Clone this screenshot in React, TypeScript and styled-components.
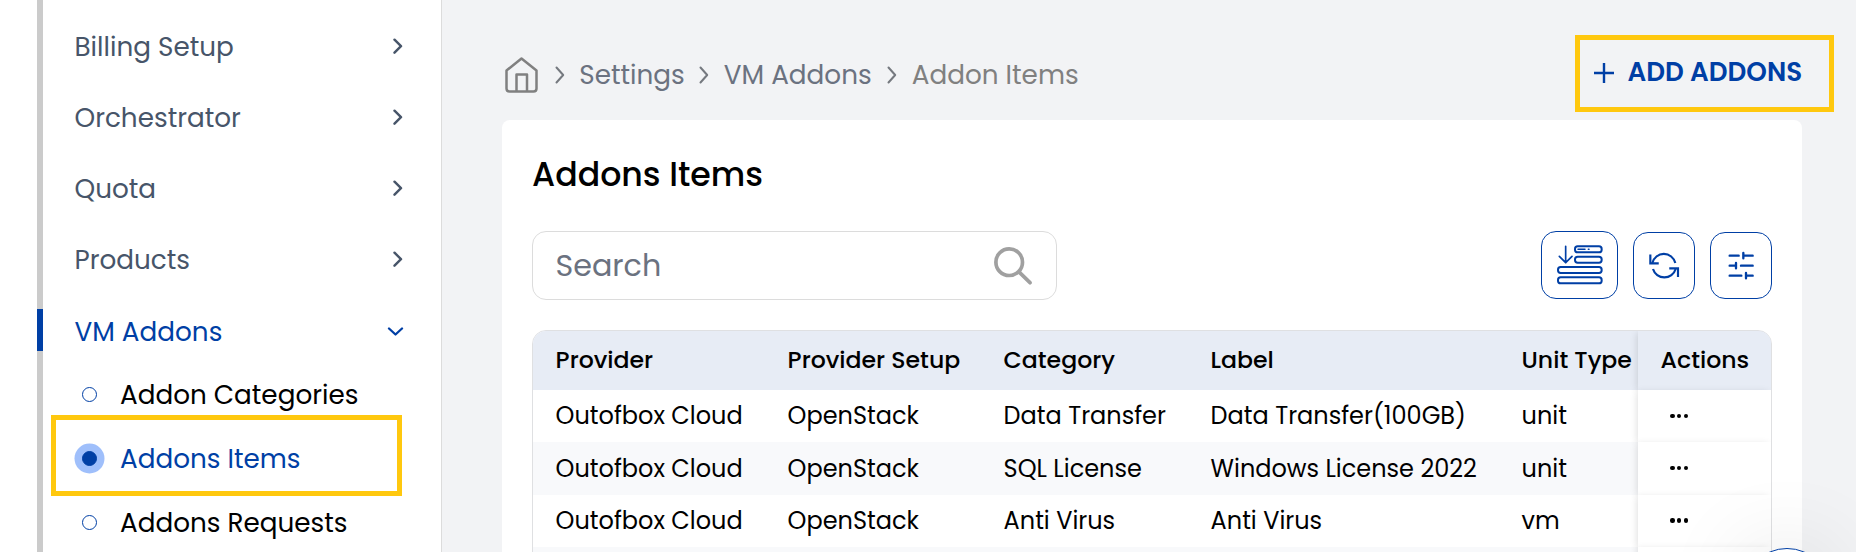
import React from 'react';
import styled, { createGlobalStyle } from 'styled-components';

const BLUE = '#003fa5';

const GlobalStyle = createGlobalStyle`
  * { box-sizing: border-box; }
  body { margin: 0; background: #fff; overflow: hidden; font-family: Poppins, Inter, 'Liberation Sans', sans-serif; }
`;

const Page = styled.div`
  display: flex;
  height: 552px;
  overflow: hidden;
  position: relative;
`;

/* Sidebar */
const Sidebar = styled.nav`
  width: 442px;
  flex: none;
  padding-left: 37px;
  border-right: 1px solid #dcdcdc;
  display: flex;
`;
const Rail = styled.div`
  width: 6px;
  background: #cbcbcb;
`;
const Menu = styled.div`
  flex: 1;
  padding-top: 15px;
  display: flex;
  flex-direction: column;
  gap: 9.33px;
`;
const MenuItem = styled.div<{ $active?: boolean }>`
  position: relative;
  height: 62px;
  flex: none;
  padding: 0 ${p => (p.$active ? 37 : 38.5)}px 0 31.5px;
  display: flex;
  align-items: center;
  justify-content: space-between;
  font-size: 26.25px;
  color: ${p => (p.$active ? BLUE : '#475569')};
`;
const ActiveMark = styled.span`
  position: absolute;
  left: -6px;
  top: 9px;
  width: 6px;
  height: 42px;
  background: ${BLUE};
`;
const Label = styled.span`
  white-space: nowrap;
`;
const MenuLabel = styled(Label)`
  padding-top: 1px;
`;
const SubMenu = styled.div`
  margin-top: -9.33px;
  display: flex;
  flex-direction: column;
`;
const SubItem = styled.div<{ $active?: boolean }>`
  position: relative;
  height: 64px;
  display: flex;
  align-items: center;
  gap: 15px;
  padding-left: 31px;
  font-size: 26.25px;
  color: ${p => (p.$active ? BLUE : '#000')};
`;
const SubLabel = styled(Label)`
  padding-top: 2px;
`;
const BulletSlot = styled.span`
  width: 31px;
  display: flex;
  justify-content: center;
`;
const Bullet = styled.span<{ $active?: boolean }>`
  width: 15.5px;
  height: 15.5px;
  border-radius: 50%;
  border: 1px solid ${BLUE};
  background: ${p => (p.$active ? BLUE : '#fff')};
  box-shadow: ${p => (p.$active ? '0 0 0 7.5px #9fbffb' : 'none')};
`;
const MenuHighlight = styled.span`
  position: absolute;
  left: 8px;
  top: -11.5px;
  width: 351px;
  height: 81px;
  border: 5px solid #ffc80e;
`;

/* Main */
const Main = styled.main`
  flex: 1;
  background: #f2f3f5;
  padding: 35px 22px 0 60px;
`;
const TopBar = styled.header`
  height: 85px;
  display: flex;
  align-items: flex-start;
  justify-content: space-between;
`;
const Breadcrumb = styled.div`
  height: 80px;
  display: flex;
  align-items: center;
  font-size: 26.25px;
  padding-left: 3px;
`;
const Crumb = styled.span<{ $w: number; $last?: boolean }>`
  width: ${p => p.$w}px;
  white-space: nowrap;
  color: ${p => (p.$last ? '#808080' : '#6b7280')};
`;
const CrumbArrow = styled.svg`
  width: 10px;
  height: 18px;
  margin-right: 14.5px;
  flex: none;
`;
const HomeIcon = styled.svg`
  width: 33px;
  height: 36px;
  margin-right: 16.8px;
  flex: none;
`;
const AddButton = styled.button`
  font: 600 26.2px Poppins, Inter, sans-serif;
  width: 259px;
  height: 77px;
  border: 5px solid #ffc80e;
  background: none;
  color: ${BLUE};
  padding: 0 0 2px 14px;
  display: flex;
  align-items: center;
  gap: 13.5px;
`;
const AddLabel = styled(Label)`
  padding-bottom: 2px;
`;
const Card = styled.section`
  width: 1300px;
  height: 480px;
  background: #fff;
  border-radius: 8px;
  padding: 30px 30px 0;
`;
const Title = styled.h1`
  margin: 0;
  height: 49px;
  line-height: 49px;
  font-size: 33.2px;
  font-weight: 500;
`;
const Tools = styled.div`
  margin-top: 32px;
  height: 69px;
  display: flex;
  align-items: flex-end;
  gap: 15px;
`;
const SearchBox = styled.div`
  width: 525px;
  height: 69px;
  border: 1px solid #dcdcdc;
  border-radius: 14px;
  margin-right: auto;
  padding: 0 24.5px 0 22.5px;
  display: flex;
  align-items: center;
  justify-content: space-between;
  font-size: 30.2px;
  color: #6b7280;
`;
const IconButton = styled.button<{ $w: number; $h: number }>`
  width: ${p => p.$w}px;
  height: ${p => p.$h}px;
  margin-bottom: 1px;
  padding: 0;
  border: 1px solid ${BLUE};
  border-radius: 15px;
  background: #fff;
  display: flex;
  align-items: center;
  justify-content: center;
`;

/* Table */
const Table = styled.div`
  margin-top: 30px;
  border: 1px solid #dfe0e2;
  border-radius: 14px 14px 0 0;
  overflow: hidden;
  height: 260px;
`;
const Row = styled.div<{ $head?: boolean; $alt?: boolean }>`
  display: grid;
  grid-template-columns: 232px 216px 207px 311px 139px 1fr;
  height: ${p => (p.$head ? 59 : 52.4)}px;
  font-size: ${p => (p.$head ? 23.6 : 24)}px;
  font-weight: ${p => (p.$head ? 500 : 400)};
  background: ${p => (p.$head ? '#e7ecf5' : p.$alt ? '#f8f9fb' : '#fff')};
`;
const Cell = styled.div<{ $head?: boolean }>`
  display: flex;
  align-items: center;
  padding: 0 0 ${p => (p.$head ? 2 : 0.6)}px 22.6px;
  white-space: nowrap;
`;
const StickyCell = styled(Cell)`
  background: ${p => (p.$head ? '#e7ecf5' : '#fff')};
  box-shadow: -2px 1px 7px -1px rgba(0, 0, 0, 0.13);
`;
const Dots = styled.span`
  display: flex;
  gap: 2.2px;
  margin-left: 9.8px;
  i { width: 4.4px; height: 4.4px; border-radius: 50%; background: #000; }
`;
const ChatBubble = styled.div`
  position: absolute;
  left: 1743px;
  top: 548px;
  width: 88px;
  height: 88px;
  border-radius: 50%;
  border: 1.5px solid ${BLUE};
  background: #fff;
  box-shadow: 0 0 90px rgba(0, 0, 0, 0.12);
`;

const Right = () => (
  <svg width="10" height="17" viewBox="0 0 10 17" fill="none" stroke="currentColor" strokeWidth="2.4" strokeLinecap="round" strokeLinejoin="round">
    <path d="M1.5 1.7 8 8.2 1.5 14.7" />
  </svg>
);
const Down = () => (
  <svg width="17" height="10" viewBox="0 0 17 10" fill="none" stroke="currentColor" strokeWidth="2.3" strokeLinecap="round" strokeLinejoin="round">
    <path d="M2 2.5 8.5 8.5 15 2.5" />
  </svg>
);
const Arrow = () => (
  <CrumbArrow viewBox="0 0 10 18" fill="none" stroke="#75797f" strokeWidth="2" strokeLinecap="round" strokeLinejoin="round">
    <path d="M1.5 1.5 8.2 9 1.5 16.5" />
  </CrumbArrow>
);

const menu = ['Billing Setup', 'Orchestrator', 'Quota', 'Products'];
const subs = ['Addon Categories', 'Addons Items', 'Addons Requests'];
const head = ['Provider', 'Provider Setup', 'Category', 'Label', 'Unit Type'];
const rows = [
  ['Outofbox Cloud', 'OpenStack', 'Data Transfer', 'Data Transfer(100GB)', 'unit'],
  ['Outofbox Cloud', 'OpenStack', 'SQL License', 'Windows License 2022', 'unit'],
  ['Outofbox Cloud', 'OpenStack', 'Anti Virus', 'Anti Virus', 'vm'],
  ['', '', '', '', ''],
];

export default function App() {
  return (
    <Page>
      <GlobalStyle />
      <Sidebar>
        <Rail />
        <Menu>
          {menu.map(t => (
            <MenuItem key={t}><MenuLabel>{t}</MenuLabel><Right /></MenuItem>
          ))}
          <MenuItem $active><ActiveMark /><MenuLabel>VM Addons</MenuLabel><Down /></MenuItem>
          <SubMenu>
            {subs.map((t, i) => (
              <SubItem key={t} $active={i === 1}>
                {i === 1 && <MenuHighlight />}
                <BulletSlot><Bullet $active={i === 1} /></BulletSlot>
                <SubLabel>{t}</SubLabel>
              </SubItem>
            ))}
          </SubMenu>
        </Menu>
      </Sidebar>
      <Main>
        <TopBar>
          <Breadcrumb>
            <HomeIcon viewBox="0 0 33 36" fill="none" stroke="#808080" strokeWidth="2.5" strokeLinejoin="round" strokeLinecap="round">
              <path d="M1.5 13.5 16.5 1.5 31.5 13.5V31.5q0 3-3 3H4.5q-3 0-3-3ZM11.5 34V17.5h10.5v16.5" />
            </HomeIcon>
            <Arrow /><Crumb $w={120}>Settings</Crumb>
            <Arrow /><Crumb $w={163.5}>VM Addons</Crumb>
            <Arrow /><Crumb $w={175} $last>Addon Items</Crumb>
          </Breadcrumb>
          <AddButton>
            <svg width="20" height="20" viewBox="0 0 20 20" stroke={BLUE} strokeWidth="2.4"><path d="M0 10H20M10 0V20" /></svg>
            <AddLabel>ADD ADDONS</AddLabel>
          </AddButton>
        </TopBar>
        <Card>
          <Title>Addons Items</Title>
          <Tools>
            <SearchBox>
              <Label>Search</Label>
              <svg width="38" height="38" viewBox="0 0 38 38" fill="none" stroke="#a0a0a0" strokeWidth="3.7" strokeLinecap="round">
                <circle cx="15.2" cy="15.2" r="13.3" /><path d="M25.2 25.2 36 35.7" />
              </svg>
            </SearchBox>
            <IconButton $w={77} $h={68} aria-label="Row density">
              <svg width="46" height="40" viewBox="110 107 138 120" fill="none" stroke={BLUE} strokeWidth="6" strokeLinecap="round" strokeLinejoin="round">
                <path d="M136 111V160M117 141 136 160 155 141" strokeWidth="5" />
                <rect x="164" y="111" width="80" height="18" rx="8" />
                <rect x="164" y="142" width="80" height="18" rx="8" />
                <rect x="113" y="173" width="131" height="18" rx="8" />
                <rect x="113" y="204" width="131" height="18" rx="8" />
                <path d="M173 120H194M204 120H206" strokeWidth="4.5" />
              </svg>
            </IconButton>
            <IconButton $w={62} $h={67} aria-label="Refresh">
              <svg width="32" height="28" viewBox="384 123 96 84" fill="none" stroke={BLUE} strokeWidth="6.5" strokeLinecap="square">
                <path d="M391 134V157H413M474 195V172H451" />
                <path d="M466 156A35.5 35.5 0 0 0 397 156M399 174A35.5 35.5 0 0 0 467 174" strokeLinecap="butt" />
              </svg>
            </IconButton>
            <IconButton $w={62} $h={67} aria-label="Filters">
              <svg width="28" height="30" viewBox="621 121 84 90" fill="none" stroke={BLUE} strokeWidth="7" strokeLinecap="round">
                <path d="M629 135H656M670 127V143M672 135H698M629 165H646M648 157V173M663 165H698M629 195H664M678 187V203M680 195H698" />
              </svg>
            </IconButton>
          </Tools>
          <Table>
            <Row $head>
              {head.map(t => <Cell key={t} $head>{t}</Cell>)}
              <StickyCell $head>Actions</StickyCell>
            </Row>
            {rows.map((r, i) => (
              <Row key={i} $alt={i % 2 === 1}>
                {r.map((t, j) => <Cell key={j}>{t}</Cell>)}
                <StickyCell><Dots><i /><i /><i /></Dots></StickyCell>
              </Row>
            ))}
          </Table>
        </Card>
      </Main>
      <ChatBubble />
    </Page>
  );
}
